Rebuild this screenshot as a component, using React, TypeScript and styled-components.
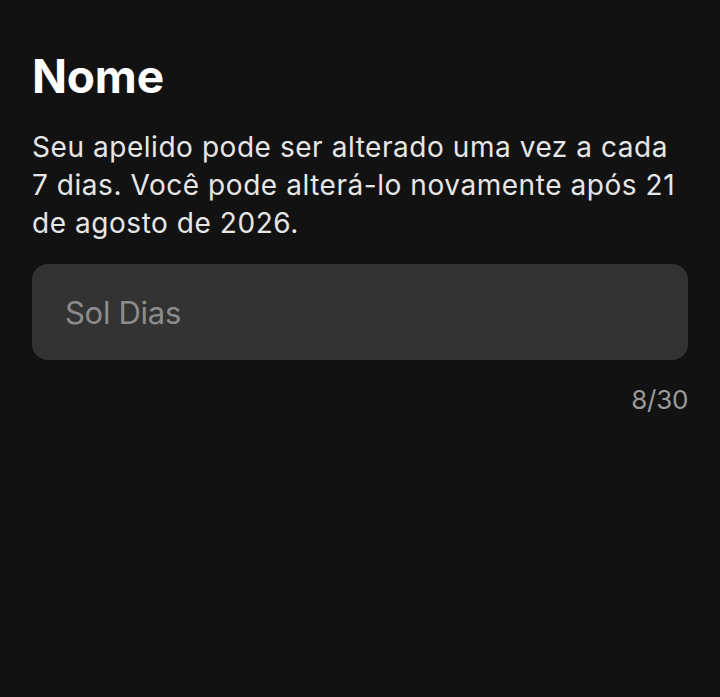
import React from 'react'
import styled, { createGlobalStyle } from 'styled-components'

const GlobalStyle = createGlobalStyle`
  html, body {
    margin: 0;
    padding: 0;
    background: #121212;
  }
  body {
    font-family: Inter, "Noto Sans", sans-serif;
    -webkit-font-smoothing: antialiased;
  }
`

const Page = styled.div`
  min-height: 697px;
  box-sizing: border-box;
  padding: 50px 32px 0 32px;
  display: flex;
  flex-direction: column;
`

const Title = styled.h1`
  margin: 0;
  color: #ffffff;
  font-size: 46px;
  font-weight: 700;
  line-height: 52px;
  letter-spacing: -0.2px;
`

const Description = styled.p`
  margin: 26px 0 0 0;
  color: #e6e6e6;
  font-size: 28px;
  font-weight: 400;
  line-height: 38px;
  letter-spacing: 0.55px;
`

const Field = styled.div`
  margin-top: 22px;
  height: 96px;
  border-radius: 16px;
  background: #333333;
  display: flex;
  align-items: center;
  padding: 0 33px;
`

const Input = styled.input`
  flex: 1;
  border: none;
  outline: none;
  background: transparent;
  padding: 0;
  font-family: Inter, "Noto Sans", sans-serif;
  font-size: 31px;
  letter-spacing: -0.3px;
  color: #8c8c8c;
  &::placeholder {
    color: #8c8c8c;
  }
`

const Counter = styled.div`
  margin-top: 24px;
  text-align: right;
  color: #9a9a9a;
  font-size: 26px;
  line-height: 32px;
  letter-spacing: -0.3px;
`

export default function App() {
  return (
    <>
      <GlobalStyle />
      <Page>
        <Title>Nome</Title>
        <Description>
          Seu apelido pode ser alterado uma vez a cada 7 dias. Você pode alterá-lo novamente após 21 de agosto de 2026.
        </Description>
        <Field>
          <Input defaultValue="Sol Dias" />
        </Field>
        <Counter>8/30</Counter>
      </Page>
    </>
  )
}
